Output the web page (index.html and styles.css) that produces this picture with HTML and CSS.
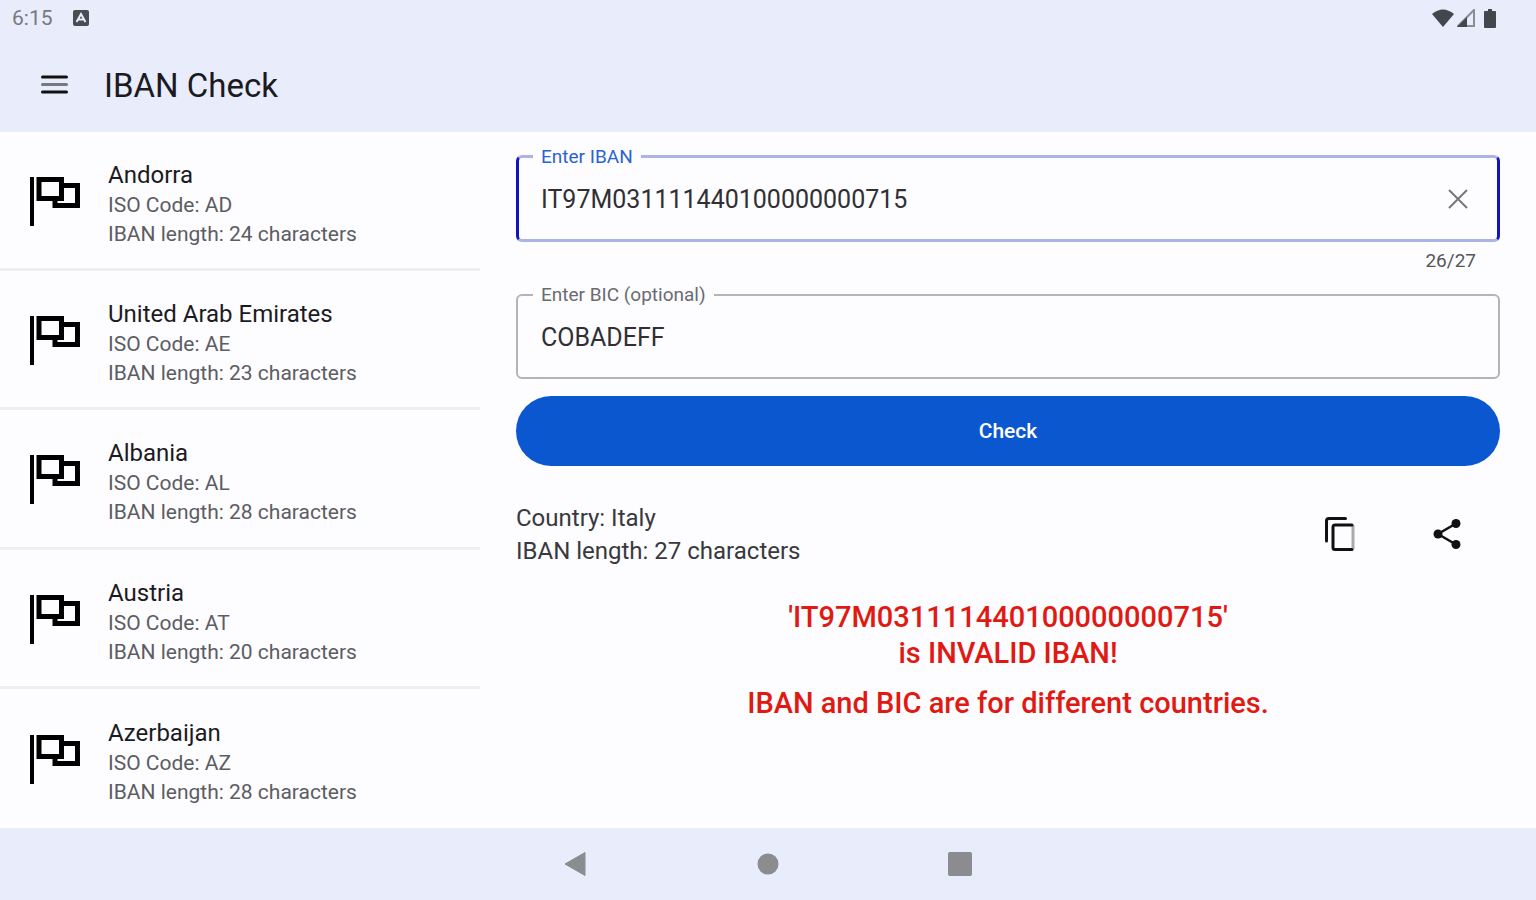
FILE: index.html
```html
<!DOCTYPE html>
<html lang="en">
<head>
    <meta charset="UTF-8">
    <meta name="viewport" content="width=device-width, initial-scale=1.0">
    <title>IBAN Check</title>
    <link rel="stylesheet" href="styles.css">
</head>
<body>
    <svg class="symbols" width="0" height="0" aria-hidden="true">
        <symbol id="flag" viewBox="0 0 50 50">
            <path d="M2 0V49" stroke="#000" stroke-width="4"/>
            <path d="M25 21.500V28.500H47.500V8.500H34" fill="none" stroke="#000" stroke-width="5"/>
            <path d="M9 2.500H31.500V21.500H9Z" fill="none" stroke="#000" stroke-width="5"/>
        </symbol>
    </svg>

    <div class="statusbar">
        <span class="clock">6:15</span>
        <svg class="notif" width="16" height="16" viewBox="0 0 16 16">
            <rect width="16" height="16" rx="2" fill="#4a4c54"/>
            <path d="M3.500 12L8 4L12.500 12M5.500 9.500H10.500" fill="none" stroke="#e8ecfb" stroke-width="2"/>
        </svg>
        <div class="signals">
            <svg width="22" height="18" viewBox="0 0 22 18">
                <path d="M11 18L0 5Q11 -4 22 5Z" fill="#44464d"/>
            </svg>
            <svg width="18" height="18" viewBox="0 0 18 18">
                <path d="M1 17L17 1V17Z" fill="none" stroke="#8b8d94" stroke-width="2"/>
                <path d="M0 18L10 8V18Z" fill="#44464d"/>
            </svg>
            <svg class="battery" width="12" height="19" viewBox="0 0 12 19">
                <path d="M4 0H8V2H11Q12 2 12 3V18Q12 19 11 19H1Q0 19 0 18V3Q0 2 1 2H4Z" fill="#44464d"/>
            </svg>
        </div>
    </div>

    <header class="appbar">
        <button class="iconBtn" aria-label="Menu">
            <svg width="28" height="20" viewBox="0 0 28 20">
                <path d="M2.500 2H26.500M2.500 17H26.500" stroke="#111" stroke-width="3" stroke-linecap="round"/>
                <path d="M2.500 9.500H26.500" stroke="#77797f" stroke-width="3" stroke-linecap="round"/>
            </svg>
        </button>
        <h1>IBAN Check</h1>
    </header>

    <main>
        <ul class="countries">
            <li>
                <svg class="flag"><use href="#flag"/></svg>
                <div>
                    <h2>Andorra</h2>
                    <p>ISO Code: AD</p>
                    <p>IBAN length: 24 characters</p>
                </div>
            </li>
            <li>
                <svg class="flag"><use href="#flag"/></svg>
                <div>
                    <h2>United Arab Emirates</h2>
                    <p>ISO Code: AE</p>
                    <p>IBAN length: 23 characters</p>
                </div>
            </li>
            <li>
                <svg class="flag"><use href="#flag"/></svg>
                <div>
                    <h2>Albania</h2>
                    <p>ISO Code: AL</p>
                    <p>IBAN length: 28 characters</p>
                </div>
            </li>
            <li>
                <svg class="flag"><use href="#flag"/></svg>
                <div>
                    <h2>Austria</h2>
                    <p>ISO Code: AT</p>
                    <p>IBAN length: 20 characters</p>
                </div>
            </li>
            <li>
                <svg class="flag"><use href="#flag"/></svg>
                <div>
                    <h2>Azerbaijan</h2>
                    <p>ISO Code: AZ</p>
                    <p>IBAN length: 28 characters</p>
                </div>
            </li>
        </ul>

        <form class="check" onsubmit="return false">
            <fieldset class="field active">
                <legend><label for="iban">Enter IBAN</label></legend>
                <div class="fieldRow">
                    <input type="text" id="iban" value="IT97M031111440100000000715" maxlength="27">
                    <button type="button" class="iconBtn" aria-label="Clear" id="clear">
                        <svg width="20" height="20" viewBox="0 0 20 20">
                            <path d="M1 1L19 19M19 1L1 19" stroke="#77787c" stroke-width="2"/>
                        </svg>
                    </button>
                </div>
            </fieldset>
            <div class="counter" id="counter">26/27</div>

            <fieldset class="field">
                <legend><label for="bic">Enter BIC (optional)</label></legend>
                <div class="fieldRow">
                    <input type="text" id="bic" value="COBADEFF">
                </div>
            </fieldset>

            <button type="submit" class="submit">Check</button>

            <div class="result">
                <div class="info">
                    <p>Country: Italy</p>
                    <p>IBAN length: 27 characters</p>
                </div>
                <button type="button" class="iconBtn" aria-label="Copy">
                    <svg width="30" height="34" viewBox="0 0 30 34">
                        <path d="M1.500 24V4Q1.500 1.500 4 1.500H20.500" fill="none" stroke="#111" stroke-width="3" stroke-linecap="round"/>
                        <path d="M28 8V32.500" stroke="#aaa" stroke-width="3"/>
                        <path d="M27 8H10Q8 8 8 10V30.500Q8 32.500 10 32.500H27" fill="none" stroke="#111" stroke-width="3" stroke-linecap="round"/>
                    </svg>
                </button>
                <button type="button" class="iconBtn" aria-label="Share">
                    <svg width="28" height="30" viewBox="0 0 28 30">
                        <path d="M23 4.500L5 15L23 25.500" fill="none" stroke="#111" stroke-width="2.500"/>
                        <circle cx="23" cy="4.500" r="4.500" fill="#111"/>
                        <circle cx="5" cy="15" r="4.500" fill="#111"/>
                        <circle cx="23" cy="25.500" r="4.500" fill="#111"/>
                    </svg>
                </button>
            </div>

            <div class="error">
                <p>'IT97M031111440100000000715'<br>is INVALID IBAN!</p>
                <p>IBAN and BIC are for different countries.</p>
            </div>
        </form>
    </main>

    <nav class="navbar">
        <button class="iconBtn" aria-label="Back">
            <svg width="24" height="26" viewBox="0 0 24 26">
                <path d="M1 13L21 1.500V24.500Z" fill="#8a8c90" stroke="#8a8c90" stroke-width="1" stroke-linejoin="round"/>
            </svg>
        </button>
        <button class="iconBtn" aria-label="Home">
            <svg width="24" height="24" viewBox="0 0 24 24">
                <circle cx="12" cy="12" r="10.500" fill="#8a8c90"/>
            </svg>
        </button>
        <button class="iconBtn" aria-label="Recent apps">
            <svg width="24" height="24" viewBox="0 0 24 24">
                <rect width="24" height="24" rx="2" fill="#8a8c90"/>
            </svg>
        </button>
    </nav>

    <script>
        let iban = document.getElementById('iban');
        let counter = document.getElementById('counter');

        function updCounter() {
            counter.textContent = iban.value.length + '/27';
        }

        iban.addEventListener('input', updCounter);
        document.getElementById('clear').addEventListener('click', function() {
            iban.value = '';
            updCounter();
        });
    </script>
</body>
</html>
```
FILE: styles.css
```css
* {
    margin: 0;
    padding: 0;
    box-sizing: border-box;
}

body {
    font-family: Roboto, "Liberation Sans", sans-serif;
    background: #fdfcff;
    color: #1b1b1f;
    min-height: 100vh;
    display: flex;
    flex-direction: column;
}

.symbols {
    position: absolute;
}

svg {
    display: block;
    flex: none;
}

.iconBtn {
    background: none;
    border: none;
    cursor: pointer;
}

.statusbar {
    background: #e8ecfb;
    height: 36px;
    padding: 0 40px 0 12px;
    display: flex;
    align-items: center;
    gap: 20px;
}

.clock {
    font-size: 21px;
    color: #77797f;
}

.signals {
    margin-left: auto;
    display: flex;
    align-items: center;
    gap: 3px;
}

.battery {
    margin-left: 6px;
}

.appbar {
    background: #e8ecfb;
    height: 96px;
    padding: 2px 40px 0;
    display: flex;
    align-items: center;
    gap: 36px;
}

h1 {
    font-size: 33px;
    font-weight: 400;
}

main {
    flex: 1;
    display: flex;
}

.countries {
    width: 480px;
    list-style: none;
    display: grid;
    grid-auto-rows: 1fr;
}

.countries li {
    padding: 4px 30px 0;
    display: flex;
    align-items: center;
    gap: 28px;
    border-bottom: 3px solid #efeff2;
}

.countries li:last-child {
    border-bottom: none;
}

.countries div {
    padding-top: 4px;
}

.flag {
    width: 50px;
    height: 50px;
}

h2 {
    font-size: 24px;
    font-weight: 400;
    line-height: 32px;
}

.countries p {
    font-size: 21px;
    line-height: 29px;
    color: #5c5d63;
}

.check {
    flex: 1;
    padding: 14px 36px;
}

.field {
    border: 2px solid #b4b4b8;
    border-radius: 6px;
    padding: 0 24px 8px 15px;
}

.field.active {
    border: 3px solid;
    border-color: #acb3e6 #1214bc;
    padding-left: 14px;
}

legend {
    padding: 0 8px;
    font-size: 19px;
    line-height: 21px;
    color: #6a6b70;
}

.active legend {
    color: #2b63d0;
}

.fieldRow {
    display: flex;
    align-items: center;
}

.fieldRow input {
    flex: 1;
    min-width: 0;
    height: 64px;
    padding: 0 8px;
    border: none;
    outline: none;
    background: none;
    font: inherit;
    font-size: 25px;
    color: #303034;
}

.fieldRow .iconBtn {
    padding: 5px;
}

.counter {
    padding: 8px 24px 13px;
    text-align: right;
    font-size: 19px;
    line-height: 21px;
    color: #55565b;
}

.submit {
    display: block;
    width: 100%;
    height: 70px;
    margin-top: 17px;
    border: none;
    border-radius: 35px;
    background: #0b57d0;
    color: white;
    font: inherit;
    font-size: 21px;
    font-weight: 500;
    cursor: pointer;
}

.result {
    margin-top: 36px;
    padding-right: 24px;
    display: flex;
    align-items: flex-start;
    gap: 48px;
}

.info {
    flex: 1;
    font-size: 24px;
    line-height: 33px;
    color: #38393d;
}

.result .iconBtn {
    height: 64px;
    padding: 0 15px;
    display: flex;
    align-items: center;
}

.error {
    margin-top: 31px;
    text-align: center;
    font-size: 29px;
    font-weight: 500;
    line-height: 36px;
    color: #e01a12;
}

.error p + p {
    margin-top: 14px;
}

.navbar {
    background: #e8ecfb;
    height: 72px;
    display: flex;
    align-items: center;
    justify-content: center;
    gap: 132px;
}

.navbar .iconBtn {
    width: 60px;
    height: 60px;
    display: flex;
    align-items: center;
    justify-content: center;
}
```
